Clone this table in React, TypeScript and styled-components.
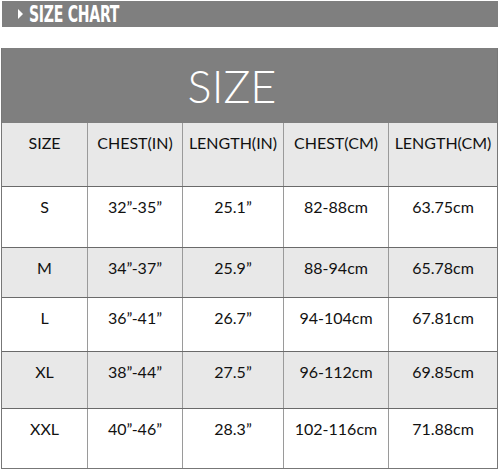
import React from "react";
import styled, { createGlobalStyle } from "styled-components";

const GlobalStyle = createGlobalStyle`
  body {
    margin: 0;
    background: #ffffff;
    font-family: "Lato", "Liberation Sans", sans-serif;
  }
`;

const Page = styled.div`
  width: 500px;
  padding: 1px 2px 0 1px;
  box-sizing: border-box;
`;

const Banner = styled.div`
  height: 26px;
  margin-left: 1px;
  background: #7f7f7f;
  display: flex;
  align-items: center;
  padding-left: 16px;
  gap: 6px;
  color: #ffffff;
`;

const Arrow = styled.span`
  width: 0;
  height: 0;
  border-top: 5px solid transparent;
  border-bottom: 5px solid transparent;
  border-left: 5px solid #ffffff;
`;

const BannerTitle = styled.span`
  font-family: "Liberation Sans Narrow", "DejaVu Sans Condensed", "Liberation Sans", sans-serif;
  font-weight: 700;
  font-size: 23px;
  letter-spacing: -0.4px;
  line-height: 1;
  display: inline-block;
  transform: scaleX(0.68);
  transform-origin: left center;
`;

const Table = styled.div`
  margin-top: 21px;
  border-left: 1px solid #777;
  border-right: 1px solid #777;
  border-bottom: 1px solid #777;
`;

const Title = styled.div`
  height: 75px;
  background: #7f7f7f;
  display: flex;
  align-items: center;
  justify-content: center;
  padding-right: 35px;
  color: #ffffff;
  font-size: 45px;
  font-weight: 300;
`;

const Row = styled.div<{ $h: number; $shade?: boolean }>`
  display: grid;
  grid-template-columns: 86px 95px 101px 105px 1fr;
  height: ${(p) => p.$h}px;
  box-sizing: border-box;
  border-bottom: 1px solid #6a6a6a;
  background: ${(p) => (p.$shade ? "#e8e8e8" : "#ffffff")};

  &:last-child {
    border-bottom: none;
  }
`;

const Cell = styled.div`
  border-right: 1px solid #9a9a9a;
  padding-top: 10px;
  text-align: center;
  font-size: 16px;
  line-height: 19px;
  color: #111;

  &:last-child {
    border-right: none;
  }
`;

const header = ["SIZE", "CHEST(IN)", "LENGTH(IN)", "CHEST(CM)", "LENGTH(CM)"];

const rows: { cells: string[]; h: number }[] = [
  { cells: ["S", "32\u201d-35\u201d", "25.1\u201d", "82-88cm", "63.75cm"], h: 61 },
  { cells: ["M", "34\u201d-37\u201d", "25.9\u201d", "88-94cm", "65.78cm"], h: 50 },
  { cells: ["L", "36\u201d-41\u201d", "26.7\u201d", "94-104cm", "67.81cm"], h: 54 },
  { cells: ["XL", "38\u201d-44\u201d", "27.5\u201d", "96-112cm", "69.85cm"], h: 57 },
  { cells: ["XXL", "40\u201d-46\u201d", "28.3\u201d", "102-116cm", "71.88cm"], h: 59 },
];

export default function App() {
  return (
    <>
      <GlobalStyle />
      <Page>
        <Banner>
          <Arrow />
          <BannerTitle>SIZE CHART</BannerTitle>
        </Banner>
        <Table>
          <Title>SIZE</Title>
          <Row $h={64} $shade>
            {header.map((h) => (
              <Cell key={h}>{h}</Cell>
            ))}
          </Row>
          {rows.map((r, i) => (
            <Row key={r.cells[0]} $h={r.h} $shade={i % 2 === 1}>
              {r.cells.map((c, j) => (
                <Cell key={j}>{c}</Cell>
              ))}
            </Row>
          ))}
        </Table>
      </Page>
    </>
  );
}
